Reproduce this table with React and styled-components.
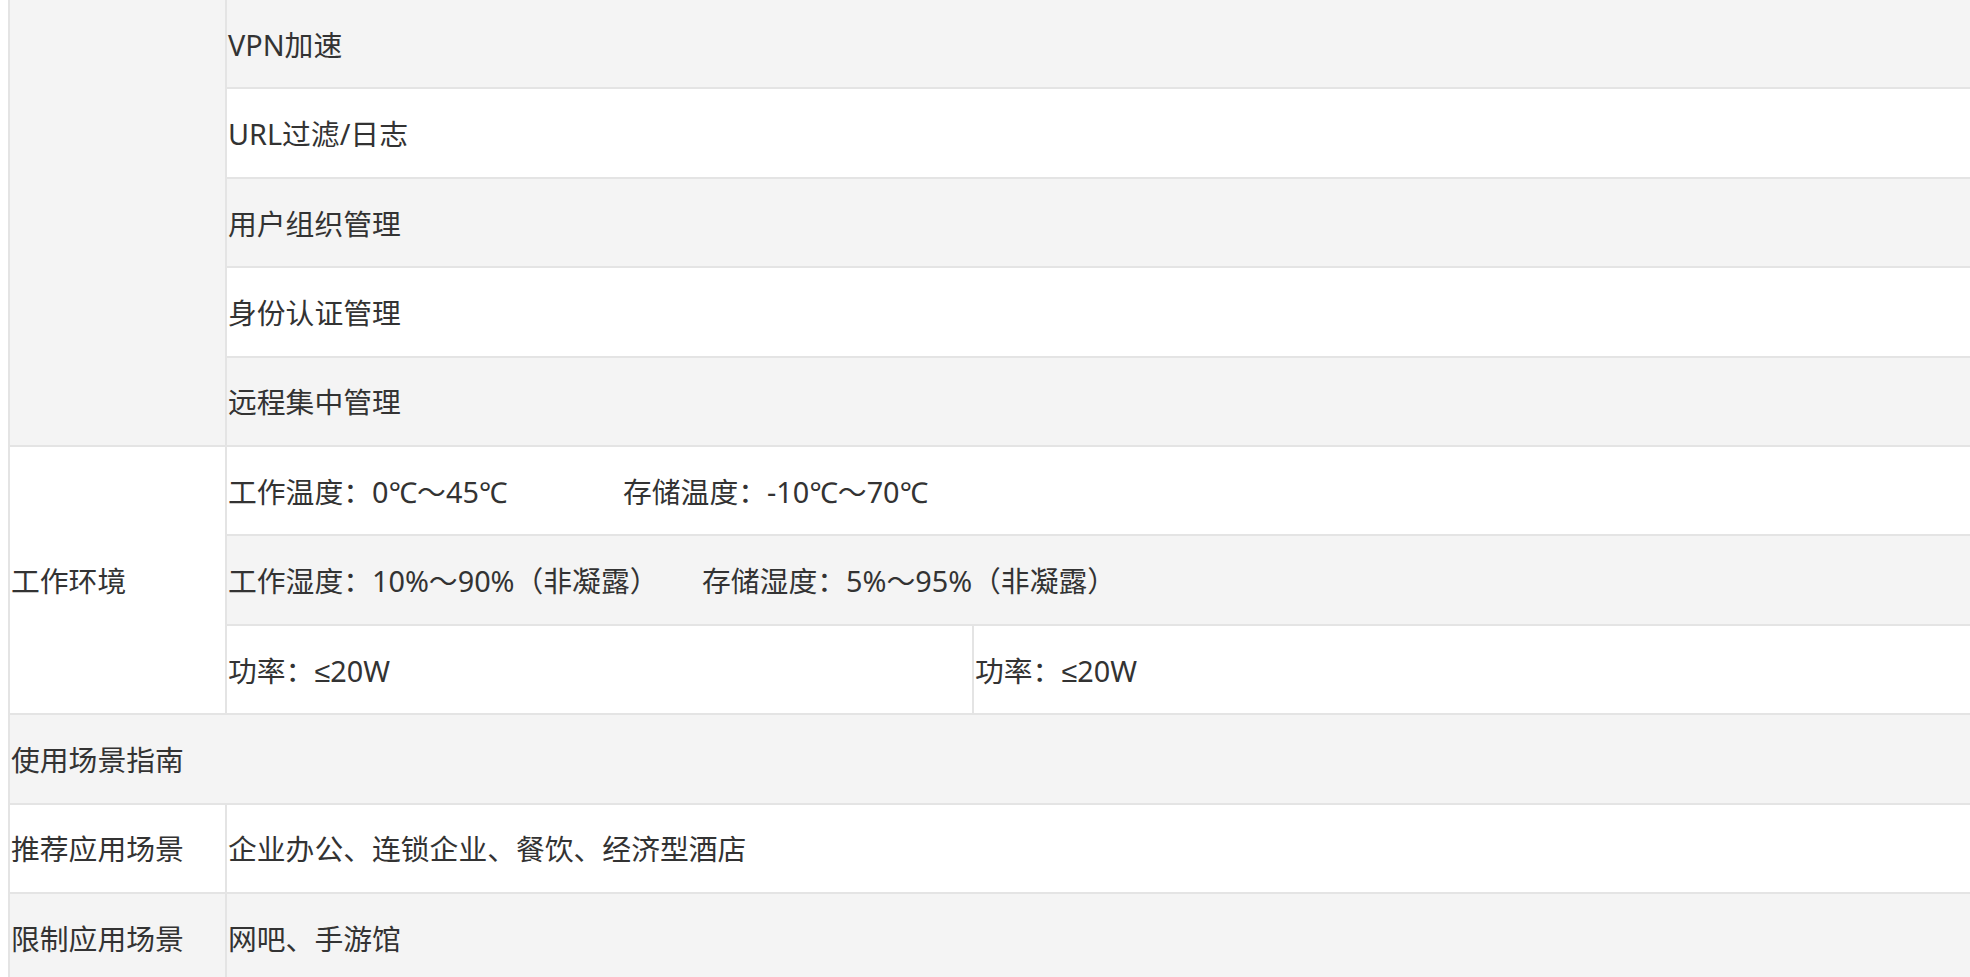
import React from 'react'
import styled, { createGlobalStyle } from 'styled-components'

const GlobalStyle = createGlobalStyle`
  html, body {
    overflow: hidden;
  }

  body {
    background-color: #fff;
    color: #333;
    font-family: "Noto Sans", "Liberation Sans", "Noto Sans CJK SC", sans-serif;
    margin: 0 0 0 8px;
  }
`

const StyledTable = styled.table`
  border-collapse: collapse;
  font-size: 28.8px;
  margin-top: -2px;
  table-layout: fixed;
  width: 2200px;
`

const StyledRow = styled.tr`
  background-color: ${props => (props.$shaded ? '#f4f4f4' : '#fff')};
`

const StyledCell = styled.td`
  background-color: ${props => props.$bg || 'transparent'};
  border: 2px solid #e4e4e4;
  border-right: none;
  box-sizing: border-box;
  height: 89.4px;
  line-height: 1.2;
  padding: 3px 0 0 1px;
  vertical-align: middle;
  white-space: nowrap;
`

const StyledSegment = styled.span`
  display: inline-block;
  width: ${props => props.$width}px;
`

const features = ['VPN加速', 'URL过滤/日志', '用户组织管理', '身份认证管理', '远程集中管理']

const App = () => (
  <>
    <GlobalStyle />
    <StyledTable>
      <colgroup>
        <col style={{ width: 217 }} />
        <col style={{ width: 747 }} />
        <col />
      </colgroup>
      <tbody>
        {features.map((name, i) => (
          <StyledRow key={name} $shaded={i % 2 === 0}>
            {i === 0 && <StyledCell rowSpan={features.length} $bg="#f4f4f4" />}
            <StyledCell colSpan={2}>{name}</StyledCell>
          </StyledRow>
        ))}
        <StyledRow>
          <StyledCell rowSpan={3} $bg="#fff">工作环境</StyledCell>
          <StyledCell colSpan={2}>
            <StyledSegment $width={395}>工作温度：0℃〜45℃</StyledSegment>
            存储温度：-10℃〜70℃
          </StyledCell>
        </StyledRow>
        <StyledRow $shaded>
          <StyledCell colSpan={2}>
            <StyledSegment $width={474}>工作湿度：10%〜90%（非凝露）</StyledSegment>
            存储湿度：5%〜95%（非凝露）
          </StyledCell>
        </StyledRow>
        <StyledRow>
          <StyledCell>功率：≤20W</StyledCell>
          <StyledCell>功率：≤20W</StyledCell>
        </StyledRow>
        <StyledRow $shaded>
          <StyledCell colSpan={3}>使用场景指南</StyledCell>
        </StyledRow>
        <StyledRow>
          <StyledCell>推荐应用场景</StyledCell>
          <StyledCell colSpan={2}>企业办公、连锁企业、餐饮、经济型酒店</StyledCell>
        </StyledRow>
        <StyledRow $shaded>
          <StyledCell>限制应用场景</StyledCell>
          <StyledCell colSpan={2}>网吧、手游馆</StyledCell>
        </StyledRow>
      </tbody>
    </StyledTable>
  </>
)

export default App
